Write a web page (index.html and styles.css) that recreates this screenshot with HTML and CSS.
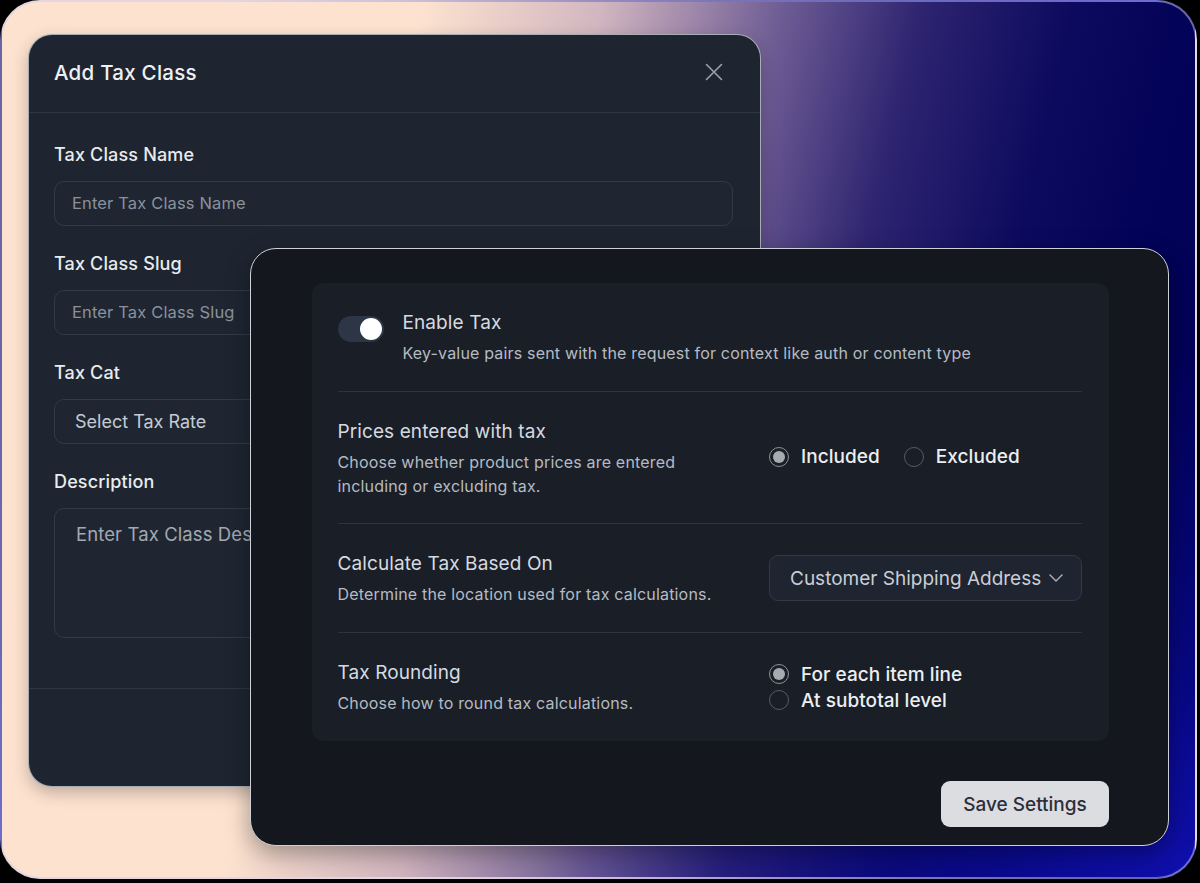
FILE: index.html
```html
<!DOCTYPE html>
<html lang="en">
<head>
<meta charset="utf-8">
<title>Tax Settings</title>
<link rel="stylesheet" href="styles.css">
</head>
<body>
<div class="frame">
  <section class="modal tax-class">
    <header class="modal-head">
      <h2 class="modal-title">Add Tax Class</h2>
      <button class="close-btn" aria-label="Close">
        <svg width="18" height="18" viewBox="0 0 18 18"><path d="M1.5 1.5L16.5 16.5M16.5 1.5L1.5 16.5" stroke="#9aa1aa" stroke-width="1.6" stroke-linecap="round"/></svg>
      </button>
    </header>
    <div class="modal-body">
      <div class="field">
        <div class="field-label">Tax Class Name</div>
        <div class="input"><span class="placeholder">Enter Tax Class Name</span></div>
      </div>
      <div class="field">
        <div class="field-label">Tax Class Slug</div>
        <div class="input"><span class="placeholder">Enter Tax Class Slug</span></div>
      </div>
      <div class="field">
        <div class="field-label">Tax Cat</div>
        <div class="input select"><span class="select-text">Select Tax Rate</span></div>
      </div>
      <div class="field">
        <div class="field-label">Description</div>
        <div class="input textarea"><span class="ta-placeholder">Enter Tax Class Description</span></div>
      </div>
    </div>
    <footer class="modal-foot"></footer>
  </section>

  <section class="modal settings">
    <div class="card">
      <div class="row toggle-row">
        <span class="toggle"><span class="knob"></span></span>
        <div class="row-text">
          <div class="row-title">Enable Tax</div>
          <div class="row-desc">Key-value pairs sent with the request for context like auth or content type</div>
        </div>
      </div>

      <div class="row split">
        <div class="row-text">
          <div class="row-title">Prices entered with tax</div>
          <div class="row-desc">Choose whether product prices are entered including or excluding tax.</div>
        </div>
        <div class="radio-group inline">
          <div class="radio-opt"><span class="radio checked"></span><span class="radio-label">Included</span></div>
          <div class="radio-opt"><span class="radio"></span><span class="radio-label">Excluded</span></div>
        </div>
      </div>

      <div class="row split">
        <div class="row-text">
          <div class="row-title">Calculate Tax Based On</div>
          <div class="row-desc">Determine the location used for tax calculations.</div>
        </div>
        <div class="dropdown">
          <span class="dropdown-text">Customer Shipping Address</span>
          <svg class="chevron" width="14" height="8" viewBox="0 0 14 8"><path d="M1 1L7 7L13 1" fill="none" stroke="#aeb3ba" stroke-width="1.4" stroke-linecap="round" stroke-linejoin="round"/></svg>
        </div>
      </div>

      <div class="row split">
        <div class="row-text">
          <div class="row-title">Tax Rounding</div>
          <div class="row-desc">Choose how to round tax calculations.</div>
        </div>
        <div class="radio-group stacked">
          <div class="radio-opt"><span class="radio checked"></span><span class="radio-label">For each item line</span></div>
          <div class="radio-opt"><span class="radio"></span><span class="radio-label">At subtotal level</span></div>
        </div>
      </div>
    </div>
    <div class="actions">
      <button class="save-btn">Save Settings</button>
    </div>
  </section>
</div>
</body>
</html>
```

FILE: styles.css
```css
* { box-sizing: border-box; }

html, body {
  margin: 0;
  padding: 0;
}

body {
  width: 1200px;
  height: 883px;
  overflow: hidden;
  background: #000;
  font-family: "Inter", "Noto Sans", sans-serif;
}

.frame {
  position: relative;
  width: 1197px;
  height: 879px;
  border: 2px solid rgba(206, 202, 245, 0.5);
  border-radius: 40px;
  background:
    radial-gradient(ellipse 55% 60% at 100% 100%, rgba(18, 18, 190, 0.85) 0%, rgba(12, 12, 170, 0.45) 45%, rgba(10, 10, 150, 0) 100%),
    linear-gradient(103deg, #fde3cf 0%, #fde3cf 30%, #d2b6c0 43%, #6e5c94 56%, #2e2470 66%, #0c0a5e 77%, #020258 86%, #010156 100%);
}

/* ---------- Modal base ---------- */
.modal {
  position: absolute;
  border-radius: 24px;
}

/* ---------- Add Tax Class ---------- */
.tax-class {
  left: 26px;
  top: 32px;
  width: 733px;
  height: 753px;
  background: #1e2530;
  border: 1px solid rgba(214, 218, 226, 0.75);
  box-shadow: 0 6px 16px rgba(40, 30, 40, 0.28);
  display: flex;
  flex-direction: column;
}

.modal-head {
  height: 78px;
  flex: none;
  display: flex;
  align-items: center;
  justify-content: space-between;
  padding: 0 30px 3px 25px;
  border-bottom: 1px solid #2d3744;
}

.modal-title {
  margin: 0;
  font-size: 20.5px;
  font-weight: 500;
  color: #eef0f3;
  letter-spacing: 0.25px;
}

.close-btn {
  width: 32px;
  height: 32px;
  padding: 0;
  border: 0;
  background: transparent;
  display: flex;
  align-items: center;
  justify-content: center;
}

.modal-body {
  flex: 1;
  padding: 30px 27px 0 25px;
}

.field {
  margin-bottom: 26px;
}

.field-label {
  font-size: 18px;
  line-height: 24px;
  font-weight: 500;
  color: #e9ebee;
  margin-bottom: 13.5px;
  letter-spacing: 0.15px;
}

.input {
  height: 45.5px;
  border: 1px solid #313b48;
  border-radius: 10px;
  background: #1f2632;
  display: flex;
  align-items: center;
  padding: 0 17px;
}

.placeholder {
  font-size: 16.5px;
  color: #8a919b;
  letter-spacing: 0.15px;
}

.select {
  padding-left: 20px;
}

.select-text {
  font-size: 18px;
  color: #c6cbd2;
}

.textarea {
  height: 130px;
  align-items: flex-start;
  padding: 13px 21px;
}

.ta-placeholder {
  font-size: 18.5px;
  line-height: 24px;
  color: #a3a9b1;
  white-space: nowrap;
  letter-spacing: 0.1px;
}

.modal-foot {
  height: 98px;
  flex: none;
  border-top: 1px solid #2d3744;
}

/* ---------- Settings ---------- */
.settings {
  left: 248px;
  top: 246px;
  width: 919px;
  height: 598px;
  background: #14181e;
  border: 1.5px solid #cdd1d7;
  border-radius: 26px;
  padding: 34px 59px 18px 60.5px;
  box-shadow: 0 8px 24px rgba(0, 0, 0, 0.35);
}

.card {
  background: #1a1f27;
  border-radius: 12px;
  padding: 0 27px 0 26px;
}

.row {
  padding: 28px 0 26px;
}

.row:nth-child(2) {
  padding-bottom: 25px;
}

.row + .row {
  border-top: 1px solid #2b3441;
}

.toggle-row {
  display: flex;
  align-items: flex-start;
  gap: 19px;
}

.toggle {
  flex: none;
  width: 46px;
  height: 26px;
  margin-top: 5px;
  border-radius: 13px;
  background: #2c3646;
  display: flex;
  justify-content: flex-end;
  align-items: center;
  padding: 2px;
}

.knob {
  width: 22px;
  height: 22px;
  border-radius: 50%;
  background: #ffffff;
}

.split {
  display: grid;
  grid-template-columns: 1fr 313px;
  column-gap: 40px;
  align-items: center;
}

.row-title {
  font-size: 19px;
  line-height: 24px;
  color: #d6dae0;
  margin-bottom: 6px;
  letter-spacing: 0.1px;
}

.row-desc {
  font-size: 16px;
  line-height: 24px;
  color: #b5bbc3;
  letter-spacing: 0.18px;
}

.radio-group.inline {
  display: flex;
  gap: 24px;
  margin-bottom: 5px;
}

.radio-group.stacked {
  display: flex;
  flex-direction: column;
  margin-bottom: 2px;
}

.radio-opt {
  display: flex;
  align-items: center;
  gap: 12px;
  height: 26px;
}

.radio {
  flex: none;
  width: 20px;
  height: 20px;
  border-radius: 50%;
  border: 1.5px solid #555c66;
  display: flex;
  align-items: center;
  justify-content: center;
}

.radio.checked {
  border-color: #8c9299;
}

.radio.checked::after {
  content: "";
  width: 12px;
  height: 12px;
  border-radius: 50%;
  background: #a6aab1;
}

.radio-label {
  font-size: 19px;
  font-weight: 500;
  color: #eceef1;
  letter-spacing: 0.05px;
}

.dropdown {
  height: 46px;
  margin-bottom: 2px;
  background: #1e2430;
  border: 1px solid #303946;
  border-radius: 9px;
  display: flex;
  align-items: center;
  justify-content: space-between;
  padding: 0 18px 0 20px;
}

.dropdown-text {
  font-size: 19px;
  color: #c9ced5;
}

.actions {
  display: flex;
  justify-content: flex-end;
  margin-top: 40px;
}

.save-btn {
  width: 168px;
  height: 46px;
  border: 0;
  border-radius: 9px;
  background: #dcdde0;
  font-family: "Inter", "Noto Sans", sans-serif;
  font-size: 19px;
  font-weight: 500;
  color: #2b2f3b;
}
```
